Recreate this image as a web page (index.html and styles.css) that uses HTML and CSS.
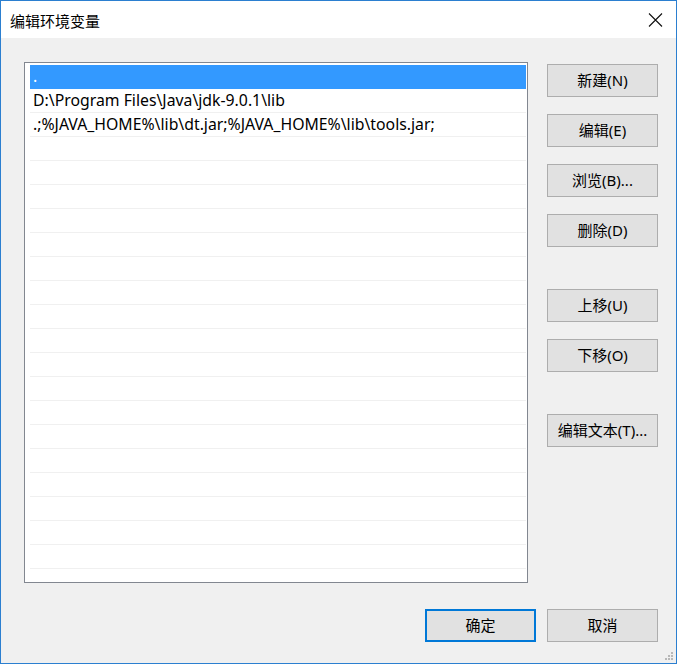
FILE: index.html
```html
<!DOCTYPE html>
<html lang="zh-CN">
<head>
<meta charset="utf-8">
<title>编辑环境变量</title>
<link rel="stylesheet" href="styles.css">
</head>
<body>
<div class="window">
  <div class="titlebar">
    <span class="title">编辑环境变量</span>
    <span class="close" aria-label="关闭">
      <svg width="15" height="14" viewBox="0 0 15 14"><path d="M1 0.5 L14 13.5 M14 0.5 L1 13.5" stroke="#111" stroke-width="1.1" fill="none"/></svg>
    </span>
  </div>
  <div class="content">
    <div class="main">
      <div class="listbox">
        <div class="row selected">.</div>
        <div class="row">D:\Program Files\Java\jdk-9.0.1\lib</div>
        <div class="row">.;%JAVA_HOME%\lib\dt.jar;%JAVA_HOME%\lib\tools.jar;</div>
        <div class="row"></div>
        <div class="row"></div>
        <div class="row"></div>
        <div class="row"></div>
        <div class="row"></div>
        <div class="row"></div>
        <div class="row"></div>
        <div class="row"></div>
        <div class="row"></div>
        <div class="row"></div>
        <div class="row"></div>
        <div class="row"></div>
        <div class="row"></div>
        <div class="row"></div>
        <div class="row"></div>
        <div class="row"></div>
        <div class="row"></div>
        <div class="row"></div>
      </div>
      <div class="side">
        <button class="btn">新建(N)</button>
        <button class="btn gap">编辑(E)</button>
        <button class="btn gap">浏览(B)...</button>
        <button class="btn gap">删除(D)</button>
        <button class="btn gap-lg">上移(U)</button>
        <button class="btn gap">下移(O)</button>
        <button class="btn gap-lg">编辑文本(T)...</button>
      </div>
    </div>
    <div class="footer">
      <button class="btn default">确定</button>
      <button class="btn">取消</button>
    </div>
    <span class="grip">
      <svg width="10" height="10" viewBox="0 0 10 10" fill="#b8b8b8">
        <rect x="7" y="1" width="2" height="2"/>
        <rect x="4" y="4" width="2" height="2"/><rect x="7" y="4" width="2" height="2"/>
        <rect x="1" y="7" width="2" height="2"/><rect x="4" y="7" width="2" height="2"/><rect x="7" y="7" width="2" height="2"/>
      </svg>
    </span>
  </div>
</div>
</body>
</html>
```

FILE: styles.css
```css
* { box-sizing: border-box; }
html, body {
  margin: 0;
  padding: 0;
  background: #f0f0f0;
}
body {
  font-family: "Noto Sans", "Noto Sans CJK SC", sans-serif;
  font-size: 15px;
  color: #000;
}
.window {
  width: 677px;
  height: 664px;
  border: 1px solid #2b7fd0;
  display: flex;
  flex-direction: column;
  background: #f0f0f0;
}
.titlebar {
  height: 37px;
  background: #fff;
  display: flex;
  align-items: center;
  justify-content: space-between;
  padding-left: 9px;
  padding-right: 13px;
  flex: none;
}
.title {
  font-family: "Noto Sans CJK SC", sans-serif;
  font-size: 15px;
  line-height: 1;
  margin-top: 1px;
}
.close {
  display: flex;
  margin-top: 1px;
}
.content {
  position: relative;
  flex: 1;
  display: flex;
  flex-direction: column;
  padding: 24px 18px 0 23px;
}
.main {
  display: flex;
  align-items: flex-start;
}
.listbox {
  width: 504px;
  height: 521px;
  border: 1px solid #828790;
  background: #fff;
  padding: 2px 1px 0 5px;
  overflow: hidden;
}
.row {
  height: 24px;
  border-bottom: 1px solid #f0f0f0;
  padding-left: 3px;
  line-height: 23px;
  white-space: nowrap;
  font-size: 15.8px;
}
.row.selected {
  background: #3399ff;
  color: #fff;
  border-bottom-color: #3399ff;
}
.side {
  display: flex;
  flex-direction: column;
  margin-left: 19px;
  padding-top: 2px;
}
.btn {
  width: 111px;
  height: 33px;
  background: #e1e1e1;
  border: 1px solid #adadad;
  font-family: "Noto Sans", "Noto Sans CJK SC", sans-serif;
  font-size: 15px;
  color: #000;
  padding: 0;
  margin: 0;
  line-height: 1;
}
.btn.gap { margin-top: 17px; }
.btn.gap-lg { margin-top: 42px; }
.btn.default {
  border: 2px solid #0078d7;
}
.footer {
  display: flex;
  justify-content: flex-end;
  gap: 11px;
  margin-top: 26px;
}
.grip {
  position: absolute;
  right: 2px;
  bottom: 2px;
  display: flex;
}
```
